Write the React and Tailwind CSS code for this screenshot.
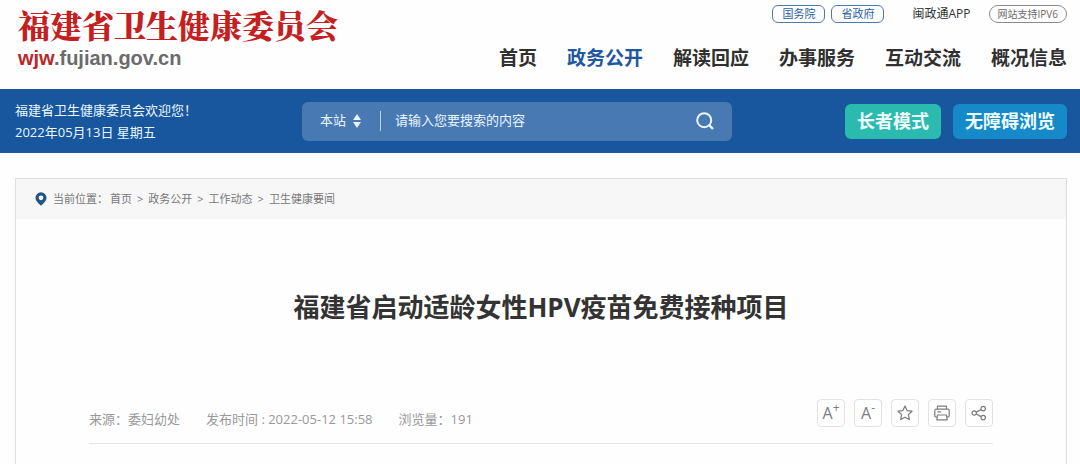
import React, { useState } from "react";

const navItems = ["首页", "政务公开", "解读回应", "办事服务", "互动交流", "概况信息"];
const crumbs = ["首页", "政务公开", "工作动态", "卫生健康要闻"];

const toolButton =
    "w-7 h-7 flex items-center justify-center border border-[#e2e2e2] rounded-sm bg-white text-[#7c7c7c] cursor-pointer";

const PinIcon = () => (
    <svg width="12" height="14" viewBox="0 0 12 14" aria-hidden="true">
        <path
            fillRule="evenodd"
            fill="#1f5583"
            d="M6 0.3a5.5 5.5 0 0 1 5.5 5.5c0 3.2-3 5.6-5.5 7.9C3.5 11.4 0.5 9 0.5 5.8A5.5 5.5 0 0 1 6 0.3zM6 3.4a2.4 2.4 0 1 0 0 4.8 2.4 2.4 0 0 0 0-4.8z"
        />
    </svg>
);

const SearchIcon = () => (
    <svg width="18" height="18" viewBox="0 0 18 18" fill="none" stroke="currentColor" strokeWidth="2" aria-hidden="true">
        <circle cx="8.2" cy="8.2" r="7" />
        <path d="M13.2 13.2l3.8 3.8" strokeWidth="2.4" />
    </svg>
);

const StarIcon = () => (
    <svg width="16" height="16" viewBox="0 0 16 16" fill="none" stroke="currentColor" strokeWidth="1.2" strokeLinejoin="round" aria-hidden="true">
        <path d="M8 1.1l2.1 4.5 4.9.6-3.6 3.4.9 5L8 12.2l-4.3 2.4.9-5L1 6.2l4.9-.6z" />
    </svg>
);

const PrintIcon = () => (
    <svg width="16" height="16" viewBox="0 0 16 16" fill="none" stroke="currentColor" strokeWidth="1.2" strokeLinejoin="round" aria-hidden="true">
        <path d="M3.5 4V1.2h9V4" />
        <path d="M3.5 12H2a1.2 1.2 0 0 1-1.2-1.2V5.5A1.3 1.3 0 0 1 2.1 4.200h11.800a1.300 1.300 0 0 1 1.300 1.300v5.300A1.200 1.200 0 0 1 14 12h-1.500" />
        <path d="M3.5 10h9l.7 4.800H2.800zM3.500 6.800h3.600" />
    </svg>
);

const ShareIcon = () => (
    <svg width="16" height="16" viewBox="0 0 16 16" fill="none" stroke="currentColor" strokeWidth="1.2" aria-hidden="true">
        <circle cx="3.2" cy="8" r="2.2" />
        <circle cx="12.2" cy="3.6" r="2.2" />
        <circle cx="12.2" cy="12.6" r="2.2" />
        <path d="M5.2 7.1l5-2.5M5.2 9l5 2.6" />
    </svg>
);

const Header = () => (
    <header className="flex justify-between pl-[18px] pr-[13px] h-[89px]">
        {/* Logo */}
        <a href="#" className="pt-[9px]">
            <div className="text-[32px] leading-[37px] font-black text-[#c3201f] whitespace-nowrap font-['Liberation_Serif','Noto_Serif_CJK_SC','Noto_Sans_CJK_SC',serif]">
                福建省卫生健康委员会
            </div>
            <div className="text-[20px] leading-6 font-bold text-[#6b6b6b] font-['Liberation_Sans',sans-serif]">
                <span className="text-[#b92728]">wjw</span>.fujian.gov.cn
            </div>
        </a>

        <div className="flex flex-col items-end">
            {/* Top links */}
            <div className="flex items-center pt-[5px] whitespace-nowrap">
                <a href="#" className="h-[18px] px-[9px] flex items-center border border-[#4f79ad] rounded-md text-[11px] text-[#2a62a4]">
                    国务院
                </a>
                <a href="#" className="ml-[6px] h-[18px] px-[9px] flex items-center border border-[#4f79ad] rounded-md text-[11px] text-[#2a62a4]">
                    省政府
                </a>
                <a href="#" className="ml-7 text-[12px] leading-[18px] text-[#333]">
                    闽政通APP
                </a>
                <a href="#" className="ml-[18px] h-[18px] px-[8px] flex items-center border border-[#8a8a8a] rounded-full text-[10px] text-[#6b6b6b]">
                    网站支持IPV6
                </a>
            </div>

            {/* Main nav */}
            <nav className="flex gap-[30px] pt-5 text-[19px] leading-[30px] font-bold whitespace-nowrap">
                {navItems.map((item) => (
                    <a key={item} href="#" className={item === "政务公开" ? "text-[#1f58a0]" : "text-[#303030]"}>
                        {item}
                    </a>
                ))}
            </nav>
        </div>
    </header>
);

const SearchBar = () => {
    const [keyword, setKeyword] = useState("");

    const handleSubmit = (e) => {
        e.preventDefault();
    };

    return (
        <form
            onSubmit={handleSubmit}
            className="flex items-center w-[430px] h-[39px] px-[18px] rounded-md bg-[#4879b2] text-[13px] text-[#e9f6ff]"
        >
            <select aria-label="搜索范围" className="appearance-none w-[33px] bg-transparent outline-none">
                <option>本站</option>
            </select>
            <svg width="8" height="14" viewBox="0 0 8 14" fill="currentColor" aria-hidden="true">
                <path d="M4 0l4 6H0zM4 14L0 8h8z" />
            </svg>
            <span className="w-px h-5 ml-[19px] mr-[14px] bg-[#b5d6f2]" />
            <input
                type="text"
                aria-label="搜索"
                placeholder="请输入您要搜索的内容"
                value={keyword}
                onChange={(e) => setKeyword(e.target.value)}
                className="flex-1 min-w-0 bg-transparent outline-none placeholder:text-[#e9f6ff]"
            />
            <button type="submit" aria-label="搜索按钮" className="cursor-pointer">
                <SearchIcon />
            </button>
        </form>
    );
};

const Banner = () => (
    <section className="flex items-center h-16 pl-[15px] pr-[13px] bg-[#18569e] whitespace-nowrap">
        <div className="w-[287px] text-[13px] leading-[22px] text-[#e9f6ff]">
            <p>福建省卫生健康委员会欢迎您！</p>
            <p>2022年05月13日 星期五</p>
        </div>
        <SearchBar />
        <div className="flex gap-3 ml-auto text-[18px] font-bold text-[#effcff]">
            <button type="button" className="h-[35px] px-3 rounded-md bg-[#2bbbae] cursor-pointer">
                长者模式
            </button>
            <button type="button" className="h-[35px] px-3 rounded-md bg-[#168ac8] cursor-pointer">
                无障碍浏览
            </button>
        </div>
    </section>
);

const Article = () => (
    <main className="flex-1 flex flex-col ml-[15px] mr-[13px] mt-[25px] border border-b-0 border-[#dedede]">
        {/* Breadcrumb */}
        <div className="flex items-center h-10 pl-[19px] bg-[#f7f7f7] text-[11px] text-[#777]">
            <PinIcon />
            <span className="ml-[6px] mr-[2px]">当前位置：</span>
            {crumbs.map((crumb, i) => (
                <React.Fragment key={crumb}>
                    {i > 0 && <span className="mx-[5px]">&gt;</span>}
                    <a href="#">{crumb}</a>
                </React.Fragment>
            ))}
        </div>

        <article className="px-[73px] pt-[72px]">
            <h1 className="text-center text-[26px] leading-8 font-bold text-[#333]">
                福建省启动适龄女性HPV疫苗免费接种项目
            </h1>

            <div className="flex items-end justify-between mt-[76px] pb-4 border-b border-[#e6e6e6]">
                <div className="flex gap-[26px] text-[13px] leading-4 text-[#999]">
                    <span>来源：委妇幼处</span>
                    <span>发布时间 : 2022-05-12 15:58</span>
                    <span>浏览量：191</span>
                </div>
                <div className="flex gap-[9px]">
                    <button type="button" aria-label="放大字体" className={toolButton}>
                        <span className="text-[16px] leading-4">A</span>
                        <span className="text-[12px] leading-4 self-start">+</span>
                    </button>
                    <button type="button" aria-label="缩小字体" className={toolButton}>
                        <span className="text-[16px] leading-4">A</span>
                        <span className="text-[12px] leading-4 self-start">-</span>
                    </button>
                    <button type="button" aria-label="收藏" className={toolButton}>
                        <StarIcon />
                    </button>
                    <button type="button" aria-label="打印" className={toolButton}>
                        <PrintIcon />
                    </button>
                    <button type="button" aria-label="分享" className={toolButton}>
                        <ShareIcon />
                    </button>
                </div>
            </div>
        </article>
    </main>
);

const App = () => {
    return (
        <div className="min-h-screen flex flex-col bg-[#fefefe] font-['Open_Sans','Noto_Sans_CJK_SC',sans-serif]">
            <Header />
            <Banner />
            <Article />
        </div>
    );
};

export default App;
